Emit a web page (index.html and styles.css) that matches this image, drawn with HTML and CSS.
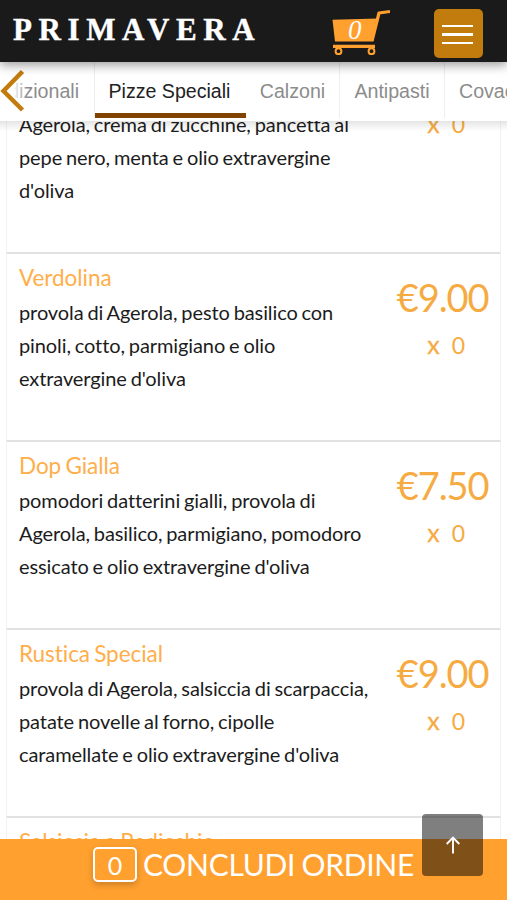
FILE: index.html
```html
<!DOCTYPE html>
<html lang="it">
<head>
<meta charset="utf-8">
<title>Primavera</title>
<link rel="stylesheet" href="styles.css">
</head>
<body>
<header class="header">
  <div class="brand">PRIMAVERA</div>
  <div class="cart">
    <svg width="60" height="48" viewBox="0 0 60 48">
      <path d="M2.500 11.800 48 10.500 43 33.500H5z" fill="#ffa02f"/>
      <path d="M42 33 49 5 60 3.500" fill="none" stroke="#ffa02f" stroke-width="3.200" stroke-linejoin="round"/>
      <path d="M3 38.300H45" stroke="#ffa02f" stroke-width="3.200"/>
      <circle cx="8.500" cy="43.200" r="2.900" fill="none" stroke="#ffa02f" stroke-width="2"/>
      <circle cx="41.500" cy="43.200" r="2.900" fill="none" stroke="#ffa02f" stroke-width="2"/>
    </svg>
    <span class="cart-count">0</span>
  </div>
  <button class="menu" aria-label="Menu"><i></i><i></i><i></i></button>
</header>
<nav class="tabs">
  <div class="tab first">dizionali</div>
  <div class="tab active">Pizze Speciali</div>
  <div class="tab calzoni">Calzoni</div>
  <div class="tab antipasti">Antipasti</div>
  <div class="tab last">Covaccini</div>
  <div class="fade"></div>
  <svg class="prev" width="26" height="44" viewBox="0 0 26 44"><path d="M22.500 2.500 3.500 22 22.500 41" fill="none" stroke="#c27c0e" stroke-width="4.500"/></svg>
</nav>
<main class="list">
  <article class="card">
    <div class="info"><p>Agerola, crema di zucchine, pancetta al<br>pepe nero, menta e olio extravergine<br>d'oliva</p></div>
    <div class="side"><div class="qty"><b>x</b><span>0</span></div></div>
  </article>
  <article class="card">
    <div class="info"><h2>Verdolina</h2><p>provola di Agerola, pesto basilico con<br>pinoli, cotto, parmigiano e olio<br>extravergine d'oliva</p></div>
    <div class="side"><div class="price">€9.00</div><div class="qty"><b>x</b><span>0</span></div></div>
  </article>
  <article class="card">
    <div class="info"><h2>Dop Gialla</h2><p>pomodori datterini gialli, provola di<br>Agerola, basilico, parmigiano, pomodoro<br>essicato e olio extravergine d'oliva</p></div>
    <div class="side"><div class="price">€7.50</div><div class="qty"><b>x</b><span>0</span></div></div>
  </article>
  <article class="card">
    <div class="info"><h2>Rustica Special</h2><p>provola di Agerola, salsiccia di scarpaccia,<br>patate novelle al forno, cipolle<br>caramellate e olio extravergine d'oliva</p></div>
    <div class="side"><div class="price">€9.00</div><div class="qty"><b>x</b><span>0</span></div></div>
  </article>
  <article class="card">
    <div class="info"><h2>Salsiccia e Radicchio</h2></div>
  </article>
</main>
<footer class="order">
  <span class="order-count">0</span><span class="order-label">CONCLUDI ORDINE</span>
</footer>
<button class="to-top" aria-label="Torna su"><svg width="16" height="18" viewBox="0 0 16 18"><path d="M8 17.500V2M1.700 8 8 1.700 14.300 8" fill="none" stroke="#fff" stroke-width="1.900"/></svg></button>
</body>
</html>
```
FILE: styles.css
```css
* { box-sizing: border-box; }
body {
  margin: 0;
  height: 900px;
  overflow: hidden;
  display: flex;
  flex-direction: column;
  position: relative;
  background: #fff;
  font-family: Lato, sans-serif;
}
.header {
  height: 62px;
  flex: none;
  background: #1a1a1a;
  display: flex;
  align-items: flex-start;
  position: relative;
  z-index: 3;
  box-shadow: 0 3px 10px rgba(0, 0, 0, .4);
}
.brand {
  width: 330px;
  padding-left: 13px;
  padding-top: 11px;
  font: bold 31px/37px "Liberation Serif", serif;
  letter-spacing: 6.600px;
  color: #fff;
  -webkit-text-stroke: .4px #fff;
}
.cart { position: relative; width: 60px; height: 48px; margin-top: 8px; }
.cart svg { display: block; }
.cart-count {
  position: absolute;
  left: 18px;
  top: 7px;
  font: italic 27px/30px "Liberation Serif", serif;
  color: #fff;
}
.menu {
  margin: 9px 0 0 44px;
  width: 49px;
  height: 49px;
  border: 0;
  border-radius: 5px;
  background: #c27c0e;
  padding: 2px 0 0 8px;
  display: flex;
  flex-direction: column;
  justify-content: center;
  gap: 6px;
}
.menu i { width: 31px; height: 2.600px; background: #fff; }
.tabs {
  height: 59px;
  flex: none;
  display: flex;
  position: relative;
  z-index: 2;
  background: #fff;
  overflow: hidden;
  font: 19.600px/58px "Liberation Sans", sans-serif;
  color: #8c8c8c;
}
.tab { flex: none; text-align: center; border-right: 1px solid #eee; white-space: nowrap; height: 56px; }
.first { width: 95px; padding-right: 15px; display: flex; justify-content: flex-end; }
.active { width: 151px; padding-right: 2px; color: #222; border-right: 0; border-bottom: 5px solid #804400; }
.calzoni { width: 94px; }
.antipasti { width: 105px; }
.last { width: 120px; padding-left: 14px; text-align: left; }
.fade { position: absolute; left: 0; top: 10px; width: 27px; height: 40px; background: linear-gradient(90deg, #fff 50%, rgba(255, 255, 255, 0)); }
.prev { position: absolute; left: 0; top: 7px; }
.list {
  flex: 1;
  min-height: 0;
  overflow: hidden;
  padding: 0 6px;
  position: relative;
}
.list::before {
  content: "";
  position: absolute;
  inset: 0 0 auto;
  height: 10px;
  background: linear-gradient(rgba(0, 0, 0, .1), rgba(0, 0, 0, 0));
}
.card {
  height: 188.200px;
  border: 1px solid #f2f2f2;
  border-width: 0 1px 2px;
  border-bottom-color: #e2e2e2;
  display: flex;
  justify-content: space-between;
  padding: 7px 12px 0;
}
.card:first-child { height: 147px; margin-top: -14.500px; padding-top: 0; }
.card:first-child .qty { margin-top: 2px; }
h2 { margin: 0; font-weight: 400; font-size: 22.500px; line-height: 34px; letter-spacing: -.05px; word-spacing: -1.500px; color: #ffae4a; }
p { margin: 1px 0 0; font-size: 20px; line-height: 33.200px; letter-spacing: -.1px; word-spacing: -1.100px; color: #1c1c1c; white-space: nowrap; }
.side { color: #f6ab42; display: flex; flex-direction: column; align-items: flex-end; }
.price { font-size: 38px; line-height: 46px; padding-top: 13px; letter-spacing: -1.100px; margin-right: -.500px; }
.qty { display: flex; gap: 12px; font-size: 23px; line-height: 30px; margin: 10px 23px 0 0; }
.qty b { font-size: 25px; line-height: 29px; font-weight: 400; -webkit-text-stroke: .3px; }
.order {
  height: 61px;
  flex: none;
  background: #ffa02f;
  display: flex;
  padding: 8px 0 0 93px;
  gap: 6px;
  color: #fff;
  font-size: 30px;
  line-height: 35px;
  white-space: nowrap;
}
.order-label { letter-spacing: -.3px; word-spacing: -1px; }
.order-count {
  width: 44px;
  height: 35px;
  border: 2px solid #fff;
  border-radius: 5px;
  text-align: center;
  font-size: 25px;
  line-height: 33px;
  box-shadow: 0 3px 6px rgba(0, 0, 0, .2);
}
.to-top {
  position: absolute;
  z-index: 4;
  left: 422px;
  top: 814px;
  width: 61px;
  height: 62px;
  border: 0;
  border-radius: 4px;
  background: rgba(0, 0, 0, .5);
  display: flex;
  align-items: center;
  justify-content: center;
  padding: 0;
}
```
